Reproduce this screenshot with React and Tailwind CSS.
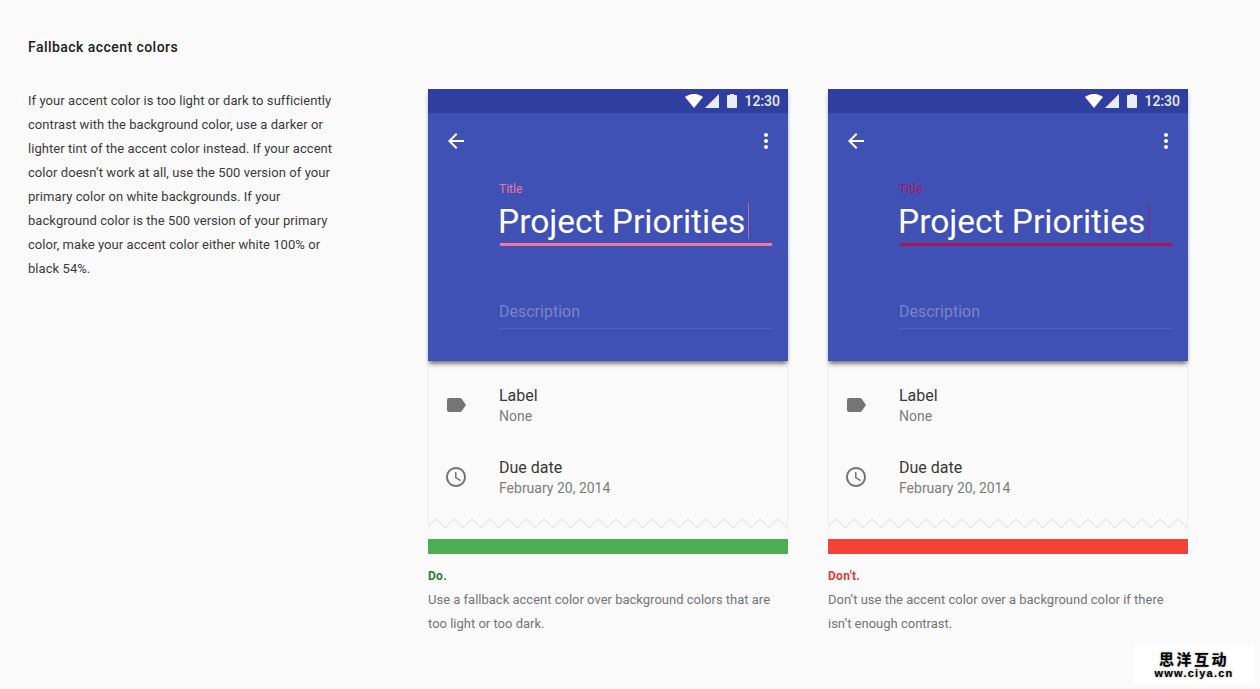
import React from 'react';

const font = "font-['Roboto',sans-serif]";

// material icon paths
const Icon = ({ d, className, viewBox = "0 0 24 24" }) => (
    <svg viewBox={viewBox} preserveAspectRatio="none" fill="currentColor" className={className}><path d={d} /></svg>
);
const paths = {
    wifi: "M12.01 21.49L23.64 7c-.45-.34-4.93-4-11.64-4C5.28 3 .81 6.66.36 7l11.64 14.5.01-.01z",
    cell: "M2 22h20V2z",
    battery: "M3 0h4v1h2a1 1 0 011 1v11a1 1 0 01-1 1H1a1 1 0 01-1-1V2a1 1 0 011-1h2z",
    back: "M20 11H7.83l5.59-5.59L12 4l-8 8 8 8 1.41-1.41L7.83 13H20v-2z",
    more: "M12 8c1.1 0 2-.9 2-2s-.9-2-2-2-2 .9-2 2 .9 2 2 2zm0 2c-1.1 0-2 .9-2 2s.9 2 2 2 2-.9 2-2-.9-2-2-2zm0 6c-1.1 0-2 .9-2 2s.9 2 2 2 2-.9 2-2-.9-2-2-2z",
    label: "M17.63 5.84C17.27 5.33 16.67 5 16 5L5 5.01C3.9 5.01 3 5.9 3 7v10c0 1.1.9 1.99 2 1.99L16 19c.67 0 1.27-.33 1.63-.84L22 12l-4.37-6.16z",
    clock: "M11.99 2C6.47 2 2 6.48 2 12s4.47 10 9.99 10C17.52 22 22 17.52 22 12S17.52 2 11.99 2zM12 20c-4.42 0-8-3.58-8-8s3.58-8 8-8 8 3.58 8 8-3.58 8-8 8zm.5-13H11v6l5.25 3.15.75-1.23-4.5-2.67z",
};

const zigzag = Array.from({ length: 22 }, (_, i) => `${i * 18 - 1},9.5 ${i * 18 + 8},1`).join(' ');

const DetailRow = ({ icon, title, value }) => (
    <div className="flex h-[72px]">
        <div className="w-[71px] pl-[16px] flex items-center">
            <Icon d={icon} className="w-[24px] h-[24px] text-[#757575]" />
        </div>
        <div className="pt-[15px]">
            <div className="text-[16px] leading-[23px] text-[#383838]">{title}</div>
            <div className="text-[14px] leading-[18px] text-[#7d7d7d]">{value}</div>
        </div>
    </div>
);

const Phone = ({ accent, barColor, headingColor, heading, caption }) => (
    <div className="w-[360px]">
        <div className="bg-[#3f51b5] h-[272px] relative z-10 shadow-[0_4px_4px_-1px_rgba(0,0,0,0.5)]">
            <div className="h-[24px] bg-[#303f9f] flex items-center justify-end pr-[8px] text-white">
                <Icon d={paths.wifi} viewBox="0.36 3 23.28 18.5" className="w-[18px] h-[14px] mr-[2px]" />
                <Icon d={paths.cell} viewBox="2 2 20 20" className="w-[14px] h-[14px] mr-[8px] opacity-90" />
                <Icon d={paths.battery} viewBox="0 0 10 14" className="w-[10px] h-[14px] mr-[7px] opacity-90" />
                <span className="text-[14px] font-medium leading-none text-white/90">12:30</span>
            </div>
            <div className="h-[56px] flex items-center justify-between px-[16px] text-white">
                <Icon d={paths.back} className="w-[24px] h-[24px]" />
                <Icon d={paths.more} className="w-[24px] h-[24px] -mr-[6px]" />
            </div>
            <div className="pl-[71px] pr-[16px] pt-[12px]">
                <div className="text-[12px] leading-[16px]" style={{ color: accent }}>Title</div>
                <div className="h-[44px] mt-[2px] pt-[4px] flex items-start -ml-px">
                    <span className="text-[33.5px] pt-[2px] leading-[34px] text-white border-r pr-[3px]" style={{ borderColor: `${accent}aa` }}>Project Priorities</span>
                </div>
                <div className="h-[3px] ml-[1px]" style={{ backgroundColor: accent }} />
                <div className="mt-[54px] text-[16px] leading-[24px] text-white/30 pb-[4px] border-b border-white/10">Description</div>
            </div>
        </div>
        <div className="h-[168px] bg-[#fafafa] border-x border-[#eeeeee] relative">
            <div className="pt-[8px] -mx-px">
                <DetailRow icon={paths.label} title="Label" value="None" />
                <DetailRow icon={paths.clock} title="Due date" value="February 20, 2014" />
            </div>
            <svg viewBox="0 0 360 11" className="absolute left-[-1px] bottom-0 w-[360px] h-[11px]">
                <polyline points={zigzag} fill="none" stroke="#e8e8e8" strokeWidth="1.3" />
            </svg>
        </div>
        <div className={`h-[15px] mt-[10px] ${barColor}`} />
        <div className={`mt-[13px] text-[12px] font-bold leading-[18px] tracking-[0.3px] ${headingColor}`}>{heading}</div>
        <p className="mt-[3px] text-[13px] leading-[24px] text-[#757575]">{caption}</p>
    </div>
);

export default function App() {
    return (
        <div className={`${font} relative bg-[#fafafa] min-h-[689px] h-[689px] overflow-hidden pl-[28px]`}>
            <h2 className="pt-[37px] text-[14px] leading-[20px] font-medium tracking-[0.45px] text-[#212121]">Fallback accent colors</h2>
            <div className="flex mt-[32px]">
                <p className="w-[312px] mr-[88px] text-[13px] leading-[24px] tracking-[0.06px] text-[#3a3a3a]">
                    If your accent color is too light or dark to sufficiently contrast with the background color, use a darker or lighter tint of the accent color instead. If your accent color doesn’t work at all, use the 500 version of your primary color on white backgrounds. If your background color is the 500 version of your primary color, make your accent color either white 100% or black 54%.
                </p>
                <div className="flex gap-[40px]">
                    <Phone
                        accent="#f4759f"
                        barColor="bg-[#4caf50]"
                        headingColor="text-[#2e7d32]"
                        heading="Do."
                        caption="Use a fallback accent color over background colors that are too light or too dark."
                    />
                    <Phone
                        accent="#ad1457"
                        barColor="bg-[#f44336]"
                        headingColor="text-[#e53935]"
                        heading="Don't."
                        caption="Don’t use the accent color over a background color if there isn’t enough contrast."
                    />
                </div>
            </div>
            {/* watermark */}
            <div className="absolute left-[1133px] top-[645px] w-[122px] h-[39px] bg-white flex flex-col items-center justify-center text-black font-bold font-['Noto_Sans_CJK_SC',sans-serif] [text-shadow:0_0_2px_rgba(0,0,0,0.5)]">
                <div className="text-[15px] leading-[16px] tracking-[2.5px]">思洋互动</div>
                <div className="text-[11px] leading-[12px] tracking-[1.2px] font-['Liberation_Sans',sans-serif]">www.ciya.cn</div>
            </div>
        </div>
    );
}
